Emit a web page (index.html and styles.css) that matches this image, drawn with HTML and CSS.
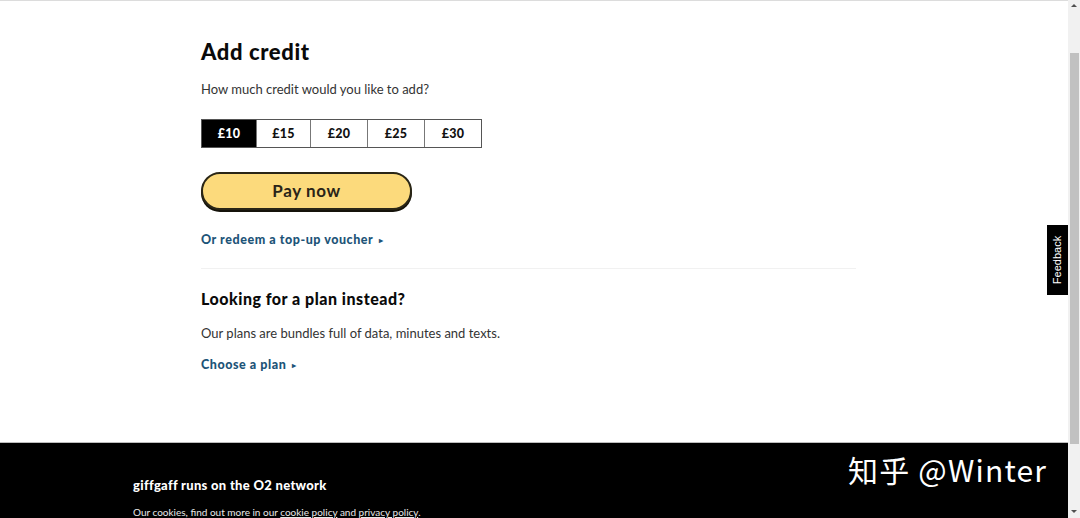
FILE: index.html
```html
<!DOCTYPE html>
<html lang="en">
<head>
<meta charset="utf-8">
<link rel="stylesheet" href="styles.css">
</head>
<body>
<div class="page">
  <main class="main">
    <section class="credit">
      <h1 class="title">Add credit</h1>
      <p class="lead">How much credit would you like to add?</p>
      <div class="amounts">
        <button class="amount amount--active">£10</button>
        <button class="amount amount--w54">£15</button>
        <button class="amount amount--w57">£20</button>
        <button class="amount amount--w57">£25</button>
        <button class="amount amount--w57">£30</button>
      </div>
      <button class="pay">Pay now</button>
      <a class="link link--voucher" href="#">Or redeem a top-up voucher <span class="tri">▸</span></a>
    </section>
    <hr class="divider">
    <section class="plan">
      <h2 class="subtitle">Looking for a plan instead?</h2>
      <p class="body">Our plans are bundles full of data, minutes and texts.</p>
      <a class="link" href="#">Choose a plan <span class="tri">▸</span></a>
    </section>
  </main>
  <footer class="footer">
    <div class="footer-inner">
      <p class="footer-title">giffgaff runs on the O2 network</p>
      <p class="footer-text">Our cookies, find out more in our <a href="#">cookie policy</a> and <a href="#">privacy policy</a>.</p>
    </div>
    <div class="watermark">知乎 @Winter</div>
  </footer>
</div>
<div class="feedback"><span>Feedback</span></div>
<div class="scrollbar">
  <div class="sb-arrow sb-up"></div>
  <div class="sb-track"><div class="sb-thumb"></div></div>
  <div class="sb-arrow sb-down"></div>
</div>
</body>
</html>
```
FILE: styles.css
```css
* { box-sizing: border-box; }
html, body { margin: 0; padding: 0; height: 518px; overflow: hidden; background: #fff; }
body { font-family: "Lato", "Liberation Sans", sans-serif; color: #111; }

.page {
  width: 1068px;
  height: 518px;
  border-top: 1px solid #dcdcdc;
  display: flex;
  flex-direction: column;
}

.main {
  padding: 38px 0 0 201px;
  width: 857px;
  height: 441px;
  flex-shrink: 0;
}

.title {
  margin: 0;
  font-family: "Lato", sans-serif;
  font-weight: 900;
  font-size: 22px;
  line-height: 26px;
  letter-spacing: 0.6px;
  color: #0a0a0a;
}

.lead {
  margin: 16px 0 0;
  font-size: 13px;
  line-height: 16px;
  color: #333;
  font-weight: 400;
}

.amounts {
  margin-top: 22px;
  display: flex;
  width: 281px;
  height: 29px;
  border: 1px solid #555;
}
.amount {
  width: 57px;
  height: 27px;
  border: 0;
  border-left: 1px solid #777;
  background: #fff;
  font-family: "Lato", sans-serif;
  font-weight: 900;
  font-size: 12.5px;
  letter-spacing: 0.3px;
  color: #111;
  padding: 0;
}
.amount--active { width: 54px; background: #000; color: #fff; border-left: 0; }
.amount--w54 { width: 54px; }
.amount--w57 { width: 57px; }

.pay {
  display: block;
  margin-top: 24px;
  width: 211px;
  height: 38px;
  border: 2px solid #2a2616;
  border-radius: 19px;
  background: #fcda7c;
  box-shadow: 0 2px 0 #15130a;
  font-family: "Lato", sans-serif;
  font-weight: 700;
  font-size: 17px;
  color: #2a2418;
  letter-spacing: 0.6px;
  padding: 0 0 1px;
}

.link {
  display: inline-block;
  font-family: "Lato", sans-serif;
  font-weight: 900;
  font-size: 12.5px;
  line-height: 16px;
  letter-spacing: 0.55px;
  color: #1d5478;
  text-decoration: none;
}
.link--voucher { margin-top: 22px; }
.tri { font-size: 8px; vertical-align: 1px; margin-left: 2px; }

.divider {
  margin: 20px 0 0;
  border: 0;
  border-top: 1px solid #f1f1f1;
  width: 655px;
}

.plan { padding-top: 20px; }
.subtitle {
  margin: 0;
  font-family: "Lato", sans-serif;
  font-weight: 900;
  font-size: 16px;
  line-height: 20px;
  letter-spacing: 0.5px;
  color: #0a0a0a;
}
.body {
  margin: 16px 0 0;
  font-size: 13px;
  line-height: 16px;
  color: #333;
}
.plan .link { margin-top: 16px; }

.footer {
  position: relative;
  background: #000;
  border-top: 1px solid #bdbdbd;
  flex: 1;
  overflow: hidden;
  color: #fff;
}
.footer-inner { padding: 34px 0 0 133px; }
.footer-title {
  margin: 0;
  font-family: "Lato", sans-serif;
  font-weight: 900;
  font-size: 13px;
  line-height: 16px;
  letter-spacing: 0.3px;
}
.footer-text {
  margin: 13px 0 0;
  font-size: 10px;
  line-height: 12px;
  letter-spacing: 0;
  color: #e8e8e8;
}
.footer-text a { color: #e8e8e8; }

.watermark {
  position: absolute;
  left: 848px;
  top: 6px;
  font-family: "Noto Sans CJK SC", "Open Sans", sans-serif;
  font-size: 30px;
  line-height: 40px;
  color: #fff;
  letter-spacing: 1.2px;
}

.feedback {
  position: absolute;
  left: 1047px;
  top: 225px;
  width: 21px;
  height: 70px;
  background: #000;
  display: flex;
  align-items: center;
  justify-content: center;
}
.feedback span {
  transform: rotate(-90deg);
  white-space: nowrap;
  color: #fff;
  font-family: "Liberation Sans", sans-serif;
  font-size: 11px;
}

.scrollbar {
  position: absolute;
  left: 1068px;
  top: 0;
  width: 12px;
  height: 518px;
  background: #f1f1f1;
  display: flex;
  flex-direction: column;
}
.sb-arrow { height: 12px; position: relative; }
.sb-up::after, .sb-down::after {
  content: "";
  position: absolute;
  left: 3px;
  width: 0; height: 0;
  border-left: 3px solid transparent;
  border-right: 3px solid transparent;
}
.sb-up::after { top: 4px; border-bottom: 3px solid #505050; }
.sb-down::after { top: 4px; border-top: 3px solid #505050; }
.sb-track { flex: 1; position: relative; }
.sb-thumb {
  position: absolute;
  left: 2px;
  right: 1px;
  top: 41px;
  height: 391px;
  background: #c1c1c1;
}
```
